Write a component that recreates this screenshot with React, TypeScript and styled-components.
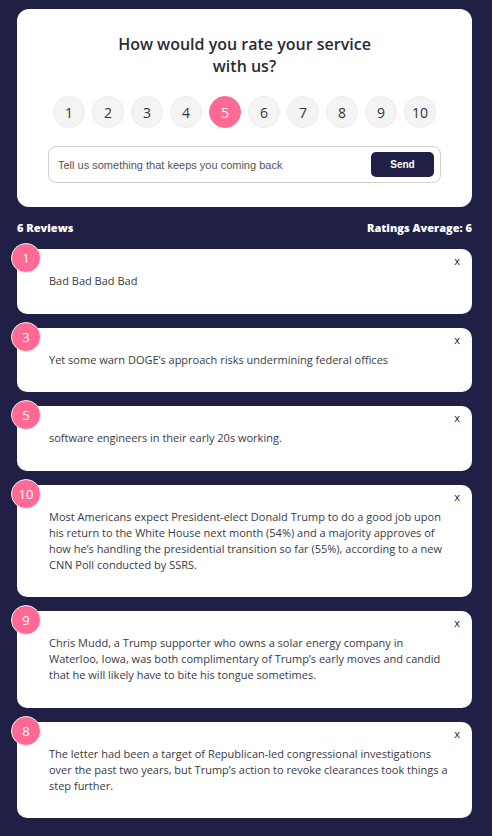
import React, { useState } from "react";
import styled, { createGlobalStyle } from "styled-components";

const reviews = [
  { id: 1, rating: 1, text: "Bad Bad Bad Bad" },
  { id: 2, rating: 3, text: "Yet some warn DOGE’s approach risks undermining federal offices" },
  { id: 3, rating: 5, text: "software engineers in their early 20s working." },
  {
    id: 4,
    rating: 10,
    text: "Most Americans expect President-elect Donald Trump to do a good job upon his return to the White House next month (54%) and a majority approves of how he’s handling the presidential transition so far (55%), according to a new CNN Poll conducted by SSRS.",
  },
  {
    id: 5,
    rating: 9,
    text: "Chris Mudd, a Trump supporter who owns a solar energy company in Waterloo, Iowa, was both complimentary of Trump’s early moves and candid that he will likely have to bite his tongue sometimes.",
  },
  {
    id: 6,
    rating: 8,
    text: "The letter had been a target of Republican-led congressional investigations over the past two years, but Trump’s action to revoke clearances took things a step further.",
  },
];

const GlobalStyle = createGlobalStyle`
  body {
    margin: 0;
    background: #202046;
    font-family: "Open Sans", "Liberation Sans", sans-serif;
  }
  * { box-sizing: border-box; }
`;

const App: React.FC = () => {
  const [selected, setSelected] = useState(5);
  const average = Math.round(reviews.reduce((s, r) => s + r.rating, 0) / reviews.length);

  return (
    <Page>
      <GlobalStyle />
      <RateCard>
        <Title>How would you rate your service with us?</Title>
        <Ratings>
          {Array.from({ length: 10 }, (_, i) => i + 1).map((n) => (
            <RateBtn key={n} $active={n === selected} onClick={() => setSelected(n)}>
              {n}
            </RateBtn>
          ))}
        </Ratings>
        <InputGroup>
          <input type="text" placeholder="Tell us something that keeps you coming back" />
          <button>Send</button>
        </InputGroup>
      </RateCard>

      <Stats>
        <h4>{reviews.length} Reviews</h4>
        <h4>Ratings Average: {average}</h4>
      </Stats>

      {reviews.map((r) => (
        <ReviewCard key={r.id}>
          <Badge>{r.rating}</Badge>
          <Close>x</Close>
          <p>{r.text}</p>
        </ReviewCard>
      ))}
    </Page>
  );
};

const Page = styled.div`
  padding: 9px 20px 16px 17px;
`;

const RateCard = styled.div`
  background: #fff;
  border-radius: 12px;
  padding: 24px 31px;
  display: flex;
  flex-direction: column;
  align-items: center;
`;

const Title = styled.h2`
  margin: 0;
  max-width: 262px;
  text-align: center;
  font-size: 16px;
  line-height: 22px;
  font-weight: 600;
  color: #2b2b33;
`;

const Ratings = styled.div`
  display: flex;
  gap: 7px;
  margin-top: 19px;
`;

const RateBtn = styled.button<{ $active: boolean }>`
  width: 32px;
  height: 32px;
  border-radius: 50%;
  border: 1px solid ${(p) => (p.$active ? "#ff6a95" : "#ececec")};
  background: ${(p) => (p.$active ? "#ff6a95" : "#f4f4f4")};
  color: ${(p) => (p.$active ? "#fff" : "#333")};
  font-family: "Open Sans", sans-serif;
  font-size: 14px;
  padding: 0;
  display: flex;
  align-items: center;
  justify-content: center;
  cursor: pointer;
`;

const InputGroup = styled.div`
  margin-top: 18px;
  width: 100%;
  height: 37px;
  border: 1px solid #cfcfcf;
  border-radius: 8px;
  display: flex;
  align-items: center;
  padding: 0 6px 0 7px;
  input {
    flex: 1;
    border: none;
    outline: none;
    font-family: "Liberation Sans", Arial, sans-serif;
    font-size: 11px;
    color: #333;
    &::placeholder { color: #555; }
  }
  button {
    width: 63px;
    height: 25px;
    border: none;
    border-radius: 5px;
    background: #202046;
    color: #fff;
    font-family: "Liberation Sans", Arial, sans-serif;
    font-weight: 700;
    font-size: 10px;
  }
`;

const Stats = styled.div`
  display: flex;
  justify-content: space-between;
  margin: 13px 0 13px;
  h4 {
    margin: 0;
    color: #fff;
    font-size: 11px;
    line-height: 16px;
    font-weight: 800;
  }
`;

const ReviewCard = styled.div`
  position: relative;
  background: #fff;
  border-radius: 10px;
  padding: 24px 20px 24.5px 32px;
  margin-bottom: 14px;
  p {
    margin: 0;
    font-size: 11px;
    line-height: 16px;
    color: #3a3a44;
  }
`;

const Badge = styled.div`
  position: absolute;
  top: -6px;
  left: -6px;
  width: 30px;
  height: 30px;
  border-radius: 50%;
  background: #ff6a95;
  border: 1px solid #eee;
  color: #fff;
  font-size: 13px;
  display: flex;
  align-items: center;
  justify-content: center;
`;

const Close = styled.button`
  position: absolute;
  top: 2px;
  right: 10px;
  border: none;
  background: none;
  padding: 2px;
  font-family: "Open Sans", sans-serif;
  font-size: 11px;
  color: #222;
  cursor: pointer;
`;

export default App;
